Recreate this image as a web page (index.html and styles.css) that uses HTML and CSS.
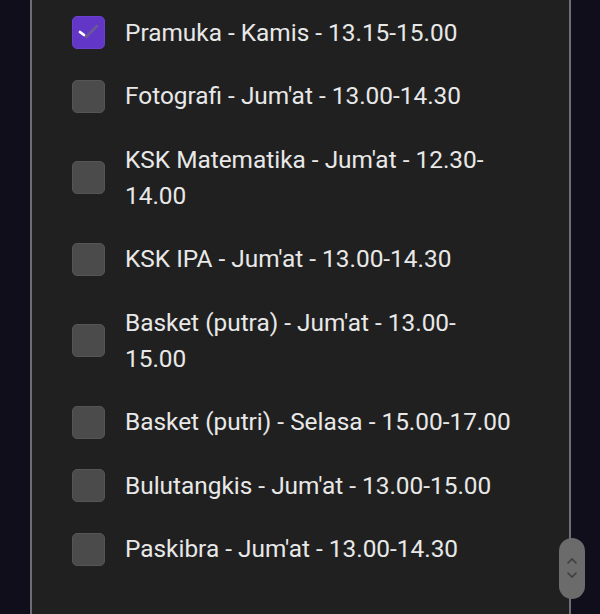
FILE: index.html
```html
<html>
<head>
<title>ekstrakurikuler</title>
<link rel="stylesheet" href="styles.css">
</head>
<body>
<div class="page">
  <div class="card">
    <ul class="choices">
      <li class="choice">
        <span class="box checked">
          <svg viewBox="0 0 33 33" width="33" height="33">
            <path d="M14 21 L25 10" stroke="#6c5896" stroke-width="2.6" stroke-linecap="round" fill="none"/>
            <path d="M8 16 L12 19" stroke="#ffffff" stroke-width="2.8" stroke-linecap="round" fill="none"/>
          </svg>
        </span>
        <span class="label">Pramuka - Kamis - 13.15-15.00</span>
      </li>
      <li class="choice">
        <span class="box"></span>
        <span class="label">Fotografi - Jum'at - 13.00-14.30</span>
      </li>
      <li class="choice">
        <span class="box"></span>
        <span class="label">KSK Matematika - Jum'at - 12.30-14.00</span>
      </li>
      <li class="choice">
        <span class="box"></span>
        <span class="label">KSK IPA - Jum'at - 13.00-14.30</span>
      </li>
      <li class="choice">
        <span class="box"></span>
        <span class="label">Basket (putra) - Jum'at - 13.00-15.00</span>
      </li>
      <li class="choice">
        <span class="box"></span>
        <span class="label">Basket (putri) - Selasa - 15.00-17.00</span>
      </li>
      <li class="choice">
        <span class="box"></span>
        <span class="label">Bulutangkis - Jum'at - 13.00-15.00</span>
      </li>
      <li class="choice">
        <span class="box"></span>
        <span class="label">Paskibra - Jum'at - 13.00-14.30</span>
      </li>
    </ul>
  </div>
  <div class="scroller">
    <svg viewBox="0 0 26 61" width="26" height="61">
      <path d="M9 25 L13 21 L17 25" stroke="#3e3e3e" stroke-width="1.6" fill="none" stroke-linecap="round"/>
      <path d="M9 35 L13 39 L17 35" stroke="#3e3e3e" stroke-width="1.6" fill="none" stroke-linecap="round"/>
    </svg>
  </div>
</div>
</body>
</html>
```

FILE: styles.css
```css
html, body {
  margin: 0;
  padding: 0;
  height: 100%;
  background-color: #110e1c;
  font-family: Roboto, "Liberation Sans", sans-serif;
}

.page {
  position: relative;
  height: 614px;
  overflow: hidden;
}

.card {
  margin-left: 30px;
  width: 537px;
  height: 640px;
  background-color: #202020;
  border-left: 2px solid #6f6d74;
  border-right: 2px solid #6f6d74;
}

.choices {
  list-style: none;
  margin: 0;
  padding: 1px 0 0 40px;
}

.choice {
  display: flex;
  align-items: center;
  gap: 20px;
  padding: 13.75px 0;
}

.box {
  flex: none;
  width: 31px;
  height: 31px;
  border-radius: 5px;
  background-color: #4b4b4b;
  border: 1px solid #555;
}

.box.checked {
  background-color: #6236c7;
  border-color: #6a40cc;
}

.box svg {
  display: block;
  margin: -1px;
}

.label {
  width: 388px;
  font-size: 24.4px;
  line-height: 36px;
  color: #e8e8e8;
}

.scroller {
  position: absolute;
  left: 559px;
  top: 538px;
  width: 26px;
  height: 61px;
  border-radius: 13px;
  background-color: #6b6b6b;
}

.scroller svg {
  display: block;
}
```
